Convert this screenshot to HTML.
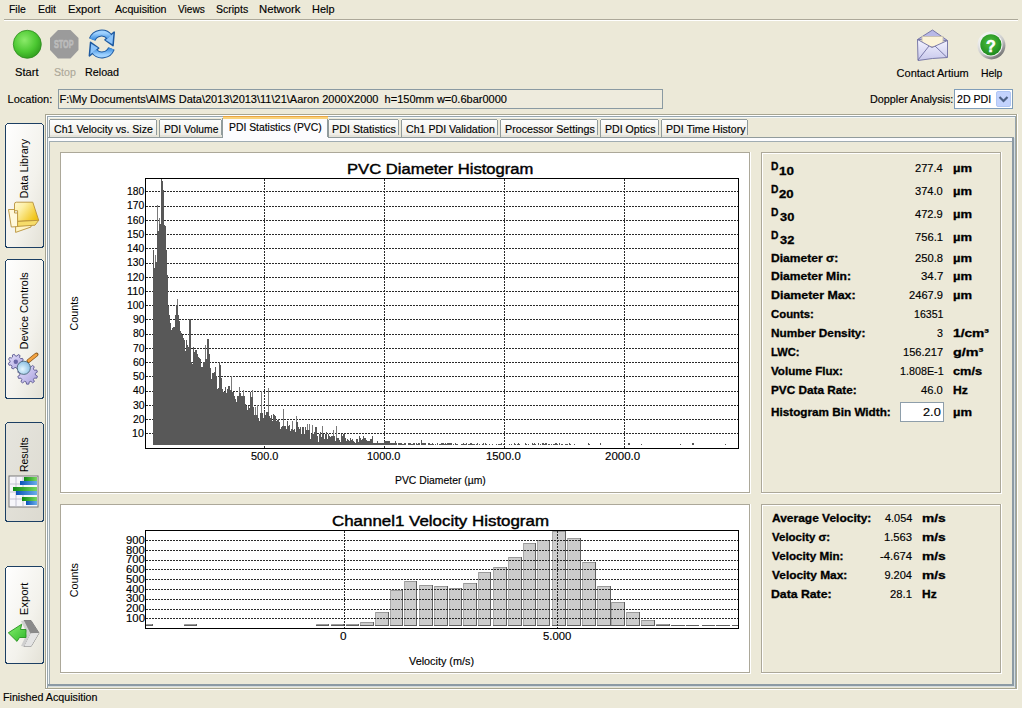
<!DOCTYPE html>
<html><head><meta charset="utf-8"><title>AIMS</title>
<style>
html,body{margin:0;padding:0;}
body{width:1022px;height:708px;overflow:hidden;position:relative;background:#ECE9D8;font-family:'Liberation Sans', sans-serif;font-size:11px;color:#000;}
.t{position:absolute;white-space:pre;line-height:11px;transform-origin:0 0;-webkit-text-stroke:0.15px;}
.a{position:absolute;box-sizing:border-box;}
svg{position:absolute;left:0;top:0;}
</style></head><body>
<svg width="1022" height="708" shape-rendering="crispEdges">
<defs>
<linearGradient id="tabg" x1="0" y1="0" x2="0" y2="1"><stop offset="0" stop-color="#FEFEFE"/><stop offset="1" stop-color="#ECEBE4"/></linearGradient>
<linearGradient id="btng" x1="0" y1="0" x2="1" y2="1"><stop offset="0" stop-color="#FFFFFF"/><stop offset="0.6" stop-color="#F3F2EC"/><stop offset="1" stop-color="#E3E1D6"/></linearGradient>
<linearGradient id="btnsel" x1="0" y1="0" x2="1" y2="1"><stop offset="0" stop-color="#E6E5DE"/><stop offset="1" stop-color="#DCDAD0"/></linearGradient>
</defs>
<rect x="4" y="19" width="1014" height="1" fill="#ACA899"/><rect x="4" y="20" width="1014" height="1" fill="#FFFFFF"/><rect x="58" y="89" width="605" height="20" fill="#8A9AA2"/><rect x="59" y="90" width="603" height="18" fill="#EEEBDD"/><rect x="954" y="89" width="59" height="20" fill="#7F9DB9"/><rect x="955" y="90" width="57" height="18" fill="#FFFFFF"/><rect x="45" y="114" width="972" height="1" fill="#A7A591"/><rect x="45" y="688" width="972" height="1" fill="#A7A591"/><rect x="45" y="114" width="1" height="575" fill="#A7A591"/><rect x="1016" y="114" width="1" height="575" fill="#A7A591"/><rect x="46" y="115" width="970" height="1" fill="#FFFFFF"/><rect x="46" y="115" width="1" height="573" fill="#FFFFFF"/><rect x="45" y="689" width="973" height="1" fill="#FFFFFF"/><rect x="1017" y="114" width="1" height="576" fill="#FFFFFF"/><rect x="47" y="116" width="969" height="1" fill="#98A6AE"/><rect x="47" y="116" width="1" height="572" fill="#98A6AE"/><rect x="48" y="117" width="967" height="1" fill="#F2F6F6"/><rect x="48" y="117" width="1" height="570" fill="#F2F6F6"/><rect x="48" y="137" width="966" height="1" fill="#919B9C"/><rect x="49" y="138" width="965" height="3" fill="#FCFCFE"/><rect x="1012" y="137" width="1" height="549" fill="#8C9AA4"/><rect x="1013" y="137" width="1" height="549" fill="#8C9AA4"/><rect x="48" y="684" width="966" height="1" fill="#8C9AA4"/><rect x="48" y="685" width="966" height="1" fill="#8C9AA4"/><rect x="49" y="141" width="963" height="1" fill="#A0ACB2"/><rect x="1015" y="116" width="1" height="572" fill="#98A6AE"/><rect x="1014" y="138" width="1" height="549" fill="#D4DCDF"/><rect x="48" y="686" width="967" height="1" fill="#D4DCDF"/><rect x="49" y="141" width="1" height="543" fill="#A0ACB2"/><rect x="60" y="152" width="690" height="341" fill="#FFFFFF"/><rect x="60" y="152" width="690" height="1" fill="#ACA899"/><rect x="60" y="492" width="690" height="1" fill="#ACA899"/><rect x="60" y="152" width="1" height="341" fill="#ACA899"/><rect x="749" y="152" width="1" height="341" fill="#ACA899"/><rect x="61" y="153" width="688" height="1" fill="#FFFFFF"/><rect x="61" y="153" width="1" height="339" fill="#FFFFFF"/><rect x="60" y="493" width="691" height="1" fill="#FFFFFF"/><rect x="750" y="152" width="1" height="342" fill="#FFFFFF"/><rect x="761" y="152" width="240" height="341" fill="#ECE9D8"/><rect x="761" y="152" width="240" height="1" fill="#ACA899"/><rect x="761" y="492" width="240" height="1" fill="#ACA899"/><rect x="761" y="152" width="1" height="341" fill="#ACA899"/><rect x="1000" y="152" width="1" height="341" fill="#ACA899"/><rect x="762" y="153" width="238" height="1" fill="#FFFFFF"/><rect x="762" y="153" width="1" height="339" fill="#FFFFFF"/><rect x="761" y="493" width="241" height="1" fill="#FFFFFF"/><rect x="1001" y="152" width="1" height="342" fill="#FFFFFF"/><rect x="60" y="504" width="690" height="169" fill="#FFFFFF"/><rect x="60" y="504" width="690" height="1" fill="#ACA899"/><rect x="60" y="672" width="690" height="1" fill="#ACA899"/><rect x="60" y="504" width="1" height="169" fill="#ACA899"/><rect x="749" y="504" width="1" height="169" fill="#ACA899"/><rect x="61" y="505" width="688" height="1" fill="#FFFFFF"/><rect x="61" y="505" width="1" height="167" fill="#FFFFFF"/><rect x="60" y="673" width="691" height="1" fill="#FFFFFF"/><rect x="750" y="504" width="1" height="170" fill="#FFFFFF"/><rect x="761" y="504" width="240" height="169" fill="#ECE9D8"/><rect x="761" y="504" width="240" height="1" fill="#ACA899"/><rect x="761" y="672" width="240" height="1" fill="#ACA899"/><rect x="761" y="504" width="1" height="169" fill="#ACA899"/><rect x="1000" y="504" width="1" height="169" fill="#ACA899"/><rect x="762" y="505" width="238" height="1" fill="#FFFFFF"/><rect x="762" y="505" width="1" height="167" fill="#FFFFFF"/><rect x="761" y="673" width="241" height="1" fill="#FFFFFF"/><rect x="1001" y="504" width="1" height="170" fill="#FFFFFF"/><rect x="900" y="402" width="44" height="20" fill="#8E9EAA"/><rect x="901" y="403" width="42" height="18" fill="#FFFFFF"/>
<path d="M49.5 137 V121.5 Q49.5 119.5 51.5 119.5 H154.5 Q156.5 119.5 156.5 121.5 V137" fill="url(#tabg)" stroke="#919B9C" stroke-width="1"/><rect x="50" y="135" width="107" height="2" fill="#E5E3DA"/><path d="M159.5 137 V121.5 Q159.5 119.5 161.5 119.5 H219.5 Q221.5 119.5 221.5 121.5 V137" fill="url(#tabg)" stroke="#919B9C" stroke-width="1"/><rect x="160" y="135" width="62" height="2" fill="#E5E3DA"/><path d="M328.5 137 V121.5 Q328.5 119.5 330.5 119.5 H396.5 Q398.5 119.5 398.5 121.5 V137" fill="url(#tabg)" stroke="#919B9C" stroke-width="1"/><rect x="329" y="135" width="70" height="2" fill="#E5E3DA"/><path d="M401.5 137 V121.5 Q401.5 119.5 403.5 119.5 H495.5 Q497.5 119.5 497.5 121.5 V137" fill="url(#tabg)" stroke="#919B9C" stroke-width="1"/><rect x="402" y="135" width="96" height="2" fill="#E5E3DA"/><path d="M500.5 137 V121.5 Q500.5 119.5 502.5 119.5 H595.5 Q597.5 119.5 597.5 121.5 V137" fill="url(#tabg)" stroke="#919B9C" stroke-width="1"/><rect x="501" y="135" width="97" height="2" fill="#E5E3DA"/><path d="M600.5 137 V121.5 Q600.5 119.5 602.5 119.5 H656.5 Q658.5 119.5 658.5 121.5 V137" fill="url(#tabg)" stroke="#919B9C" stroke-width="1"/><rect x="601" y="135" width="58" height="2" fill="#E5E3DA"/><path d="M661.5 137 V121.5 Q661.5 119.5 663.5 119.5 H745.5 Q747.5 119.5 747.5 121.5 V137" fill="url(#tabg)" stroke="#919B9C" stroke-width="1"/><rect x="662" y="135" width="86" height="2" fill="#E5E3DA"/><path d="M222.5 138 V119.5 Q222.5 116.5 225.5 116.5 H324.5 Q327.5 116.5 327.5 119.5 V138" fill="#FCFCFE" stroke="#919B9C" stroke-width="1"/><rect x="223" y="116" width="105" height="1" fill="#EAA544"/><rect x="223" y="117" width="105" height="2" fill="#F9D27A"/><rect x="223" y="137" width="105" height="3" fill="#FCFCFE"/>
<rect x="5.5" y="123.5" width="38" height="124" rx="3" ry="3" fill="url(#btng)" stroke="#1C3F63" stroke-width="1"/><rect x="5.5" y="259.5" width="38" height="139" rx="3" ry="3" fill="url(#btng)" stroke="#1C3F63" stroke-width="1"/><rect x="5.5" y="422.5" width="38" height="99" rx="3" ry="3" fill="url(#btnsel)" stroke="#1C3F63" stroke-width="1"/><rect x="5.5" y="566.5" width="38" height="97" rx="3" ry="3" fill="url(#btng)" stroke="#1C3F63" stroke-width="1"/>
<rect x="145" y="178" width="594" height="271" fill="#FFFFFF"/><line x1="146" y1="433.5" x2="738" y2="433.5" stroke="#2A2A2A" stroke-width="1" stroke-dasharray="2 1"/><line x1="146" y1="419.5" x2="738" y2="419.5" stroke="#2A2A2A" stroke-width="1" stroke-dasharray="2 1"/><line x1="146" y1="405.5" x2="738" y2="405.5" stroke="#2A2A2A" stroke-width="1" stroke-dasharray="2 1"/><line x1="146" y1="391.5" x2="738" y2="391.5" stroke="#2A2A2A" stroke-width="1" stroke-dasharray="2 1"/><line x1="146" y1="376.5" x2="738" y2="376.5" stroke="#2A2A2A" stroke-width="1" stroke-dasharray="2 1"/><line x1="146" y1="362.5" x2="738" y2="362.5" stroke="#2A2A2A" stroke-width="1" stroke-dasharray="2 1"/><line x1="146" y1="348.5" x2="738" y2="348.5" stroke="#2A2A2A" stroke-width="1" stroke-dasharray="2 1"/><line x1="146" y1="334.5" x2="738" y2="334.5" stroke="#2A2A2A" stroke-width="1" stroke-dasharray="2 1"/><line x1="146" y1="319.5" x2="738" y2="319.5" stroke="#2A2A2A" stroke-width="1" stroke-dasharray="2 1"/><line x1="146" y1="305.5" x2="738" y2="305.5" stroke="#2A2A2A" stroke-width="1" stroke-dasharray="2 1"/><line x1="146" y1="291.5" x2="738" y2="291.5" stroke="#2A2A2A" stroke-width="1" stroke-dasharray="2 1"/><line x1="146" y1="277.5" x2="738" y2="277.5" stroke="#2A2A2A" stroke-width="1" stroke-dasharray="2 1"/><line x1="146" y1="263.5" x2="738" y2="263.5" stroke="#2A2A2A" stroke-width="1" stroke-dasharray="2 1"/><line x1="146" y1="248.5" x2="738" y2="248.5" stroke="#2A2A2A" stroke-width="1" stroke-dasharray="2 1"/><line x1="146" y1="234.5" x2="738" y2="234.5" stroke="#2A2A2A" stroke-width="1" stroke-dasharray="2 1"/><line x1="146" y1="220.5" x2="738" y2="220.5" stroke="#2A2A2A" stroke-width="1" stroke-dasharray="2 1"/><line x1="146" y1="206.5" x2="738" y2="206.5" stroke="#2A2A2A" stroke-width="1" stroke-dasharray="2 1"/><line x1="146" y1="191.5" x2="738" y2="191.5" stroke="#2A2A2A" stroke-width="1" stroke-dasharray="2 1"/><line x1="264.5" y1="179" x2="264.5" y2="448" stroke="#2A2A2A" stroke-width="1" stroke-dasharray="2 1"/><line x1="384.5" y1="179" x2="384.5" y2="448" stroke="#2A2A2A" stroke-width="1" stroke-dasharray="2 1"/><line x1="504.5" y1="179" x2="504.5" y2="448" stroke="#2A2A2A" stroke-width="1" stroke-dasharray="2 1"/><line x1="624.5" y1="179" x2="624.5" y2="448" stroke="#2A2A2A" stroke-width="1" stroke-dasharray="2 1"/><path d="M153 250H154V445H153ZM154 268H155V445H154ZM155 262H156V445H155ZM156 262H157V445H156ZM157 231H158V445H157ZM158 231H159V445H158ZM159 224H160V445H159ZM160 224H161V445H160ZM161 179H162V445H161ZM162 181H163V445H162ZM163 190H164V445H163ZM164 225H165V445H164ZM165 226H166V445H165ZM166 250H167V445H166ZM167 275H168V445H167ZM168 306H169V445H168ZM169 315H170V445H169ZM170 323H171V445H170ZM171 330H172V445H171ZM172 328H173V445H172ZM173 327H174V445H173ZM174 327H175V445H174ZM175 315H176V445H175ZM176 305H177V445H176ZM177 305H178V445H177ZM178 315H179V445H178ZM179 321H180V445H179ZM180 331H181V445H180ZM181 333H182V445H181ZM182 335H183V445H182ZM183 338H184V445H183ZM184 340H185V445H184ZM185 351H186V445H185ZM186 340H187V445H186ZM187 345H188V445H187ZM188 347H189V445H188ZM189 319H190V445H189ZM190 319H191V445H190ZM191 362H192V445H191ZM192 364H193V445H192ZM193 347H194V445H193ZM194 352H195V445H194ZM195 350H196V445H195ZM196 350H197V445H196ZM197 354H198V445H197ZM198 357H199V445H198ZM199 358H200V445H199ZM200 359H201V445H200ZM201 367H202V445H201ZM202 367H203V445H202ZM203 362H204V445H203ZM204 362H205V445H204ZM205 359H206V445H205ZM206 359H207V445H206ZM207 339H208V445H207ZM208 339H209V445H208ZM209 354H210V445H209ZM210 368H211V445H210ZM211 379H212V445H211ZM212 373H213V445H212ZM213 373H214V445H213ZM214 372H215V445H214ZM215 367H216V445H215ZM216 376H217V445H216ZM217 389H218V445H217ZM218 388H219V445H218ZM219 362H220V445H219ZM220 365H221V445H220ZM221 378H222V445H221ZM222 389H223V445H222ZM223 392H224V445H223ZM224 392H225V445H224ZM225 387H226V445H225ZM226 393H227V445H226ZM227 389H228V445H227ZM228 386H229V445H228ZM229 386H230V445H229ZM230 390H231V445H230ZM231 390H232V445H231ZM232 392H233V445H232ZM233 392H234V445H233ZM234 396H235V445H234ZM235 399H236V445H235ZM236 402H237V445H236ZM237 396H238V445H237ZM238 396H239V445H238ZM239 393H240V445H239ZM240 393H241V445H240ZM241 396H242V445H241ZM242 396H243V445H242ZM243 396H244V445H243ZM244 396H245V445H244ZM245 404H246V445H245ZM246 406H247V445H246ZM247 410H248V445H247ZM248 406H249V445H248ZM249 408H250V445H249ZM250 392H251V445H250ZM251 397H252V445H251ZM252 397H253V445H252ZM253 407H254V445H253ZM254 415H255V445H254ZM255 415H256V445H255ZM256 415H257V445H256ZM257 415H258V445H257ZM258 418H259V445H258ZM259 421H260V445H259ZM260 413H261V445H260ZM261 413H262V445H261ZM262 413H263V445H262ZM263 418H264V445H263ZM264 411H265V445H264ZM265 415H266V445H265ZM266 412H267V445H266ZM267 412H268V445H267ZM268 412H269V445H268ZM269 416H270V445H269ZM270 418H271V445H270ZM271 415H272V445H271ZM272 421H273V445H272ZM273 414H274V445H273ZM274 415H275V445H274ZM275 416H276V445H275ZM276 421H277V445H276ZM277 420H278V445H277ZM278 419H279V445H278ZM279 422H280V445H279ZM280 429H281V445H280ZM281 427H282V445H281ZM282 426H283V445H282ZM283 426H284V445H283ZM284 426H285V445H284ZM285 426H286V445H285ZM286 429H287V445H286ZM287 421H288V445H287ZM288 426H289V445H288ZM289 425H290V445H289ZM290 431H291V445H290ZM291 429H292V445H291ZM292 429H293V445H292ZM293 430H294V445H293ZM294 429H295V445H294ZM295 432H296V445H295ZM296 422H297V445H296ZM297 422H298V445H297ZM298 427H299V445H298ZM299 429H300V445H299ZM300 427H301V445H300ZM301 434H302V445H301ZM302 427H303V445H302ZM303 427H304V445H303ZM304 434H305V445H304ZM305 427H306V445H305ZM306 430H307V445H306ZM307 430H308V445H307ZM308 430H309V445H308ZM309 430H310V445H309ZM310 439H311V445H310ZM311 434H312V445H311ZM312 434H313V445H312ZM313 434H314V445H313ZM314 432H315V445H314ZM315 427H316V445H315ZM316 427H317V445H316ZM317 436H318V445H317ZM318 442H319V445H318ZM319 434H320V445H319ZM320 432H321V445H320ZM321 437H322V445H321ZM322 434H323V445H322ZM323 434H324V445H323ZM324 439H325V445H324ZM325 434H326V445H325ZM326 432H327V445H326ZM327 439H328V445H327ZM328 434H329V445H328ZM329 436H330V445H329ZM330 437H331V445H330ZM331 436H332V445H331ZM332 436H333V445H332ZM333 436H334V445H333ZM334 436H335V445H334ZM335 441H336V445H335ZM336 438H337V445H336ZM337 438H338V445H337ZM338 438H339V445H338ZM339 440H340V445H339ZM340 442H341V445H340ZM341 434H342V445H341ZM342 436H343V445H342ZM343 434H344V445H343ZM344 434H345V445H344ZM345 438H346V445H345ZM346 441H347V445H346ZM347 439H348V445H347ZM348 440H349V445H348ZM349 441H350V445H349ZM350 438H351V445H350ZM351 440H352V445H351ZM352 439H353V445H352ZM353 441H354V445H353ZM354 442H355V445H354ZM355 443H356V445H355ZM356 439H357V445H356ZM357 439H358V445H357ZM358 442H359V445H358ZM359 436H360V445H359ZM360 438H361V445H360ZM361 440H362V445H361ZM362 439H363V445H362ZM363 436H364V445H363ZM364 438H365V445H364ZM365 438H366V445H365ZM366 440H367V445H366ZM367 441H368V445H367ZM368 441H369V445H368ZM369 441H370V445H369ZM370 439H371V445H370ZM371 439H372V445H371ZM372 436H373V445H372ZM373 443H374V445H373ZM374 443H375V445H374ZM375 443H376V445H375ZM376 443H377V445H376ZM377 441H378V445H377ZM378 443H379V445H378ZM379 443H380V445H379ZM380 443H381V445H380ZM381 443H382V445H381ZM382 443H383V445H382ZM383 443H384V445H383ZM384 441H385V445H384ZM385 441H386V445H385ZM386 441H387V445H386ZM387 441H388V445H387ZM388 441H389V445H388ZM389 441H390V445H389ZM390 443H391V445H390ZM391 443H392V445H391ZM392 443H393V445H392ZM393 443H394V445H393ZM394 443H395V445H394ZM395 441H396V445H395ZM396 443H397V445H396ZM398 443H399V445H398ZM399 443H400V445H399ZM400 443H401V445H400ZM401 443H402V445H401ZM402 444H403V445H402ZM403 444H404V445H403ZM404 443H405V445H404ZM405 443H406V445H405ZM408 443H409V445H408ZM409 443H410V445H409ZM410 443H411V445H410ZM411 444H412V445H411ZM412 444H413V445H412ZM413 443H414V445H413ZM414 443H415V445H414ZM416 443H417V445H416ZM417 444H418V445H417ZM418 443H419V445H418ZM419 443H420V445H419ZM421 440H422V445H421ZM422 443H423V445H422ZM423 443H424V445H423ZM424 443H425V445H424ZM425 443H426V445H425ZM428 443H429V445H428ZM429 443H430V445H429ZM430 444H431V445H430ZM431 444H432V445H431ZM432 443H433V445H432ZM433 444H434V445H433ZM435 444H436V445H435ZM437 443H438V445H437ZM439 444H440V445H439ZM440 444H441V445H440ZM441 443H442V445H441ZM442 443H443V445H442ZM443 443H444V445H443ZM444 444H445V445H444ZM445 443H446V445H445ZM446 444H447V445H446ZM447 443H448V445H447ZM448 443H449V445H448ZM449 443H450V445H449ZM450 443H451V445H450ZM451 443H452V445H451ZM453 444H454V445H453ZM455 443H456V445H455ZM456 444H457V445H456ZM457 444H458V445H457ZM461 444H462V445H461ZM462 444H463V445H462ZM463 443H464V445H463ZM464 444H465V445H464ZM465 444H466V445H465ZM466 443H467V445H466ZM468 444H469V445H468ZM469 444H470V445H469ZM470 443H471V445H470ZM471 443H472V445H471ZM472 444H473V445H472ZM473 444H474V445H473ZM474 444H475V445H474ZM476 444H477V445H476ZM477 443H478V445H477ZM479 444H480V445H479ZM482 444H483V445H482ZM483 443H484V445H483ZM485 443H486V445H485ZM486 444H487V445H486ZM489 444H490V445H489ZM492 444H493V445H492ZM496 444H497V445H496ZM498 444H499V445H498ZM499 444H500V445H499ZM500 444H501V445H500ZM501 443H502V445H501ZM503 444H504V445H503ZM509 444H510V445H509ZM511 444H512V445H511ZM514 443H515V445H514ZM515 444H516V445H515ZM517 444H518V445H517ZM518 443H519V445H518ZM519 444H520V445H519ZM525 443H526V445H525ZM526 444H527V445H526ZM528 444H529V445H528ZM532 443H533V445H532ZM533 444H534V445H533ZM534 443H535V445H534ZM535 444H536V445H535ZM538 443H539V445H538ZM540 444H541V445H540ZM542 443H543V445H542ZM543 443H544V445H543ZM544 444H545V445H544ZM545 443H546V445H545ZM546 443H547V445H546ZM548 444H549V445H548ZM549 444H550V445H549ZM551 444H552V445H551ZM553 444H554V445H553ZM554 444H555V445H554ZM555 443H556V445H555ZM556 443H557V445H556ZM557 444H558V445H557ZM559 443H560V445H559ZM561 444H562V445H561ZM562 444H563V445H562ZM565 444H566V445H565ZM566 444H567V445H566ZM567 444H568V445H567ZM569 443H570V445H569ZM570 444H571V445H570ZM574 444H575V445H574ZM588 443H589V445H588ZM589 444H590V445H589ZM600 443H601V445H600ZM628 443H629V445H628ZM629 443H630V445H629ZM641 444H642V445H641ZM680 444H681V445H680ZM692 443H693V445H692ZM693 443H694V445H693ZM725 444H726V445H725Z" fill="#585858"/><path d="M155 255H156V262H155ZM157 205H158V231H157ZM159 218H160V224H159ZM177 299H178V305H177ZM205 345H206V359H205ZM231 376H232V390H231ZM239 387H240V393H239ZM243 390H244V396H243ZM252 390H253V397H252ZM255 407H256V415H255ZM257 405H258V415H257ZM261 391H262V413H261ZM268 388H269V412H268ZM283 409H284V426H283ZM292 421H293V429H292ZM296 416H297V422H296ZM307 424H308V430H307ZM309 424H310V430H309ZM312 425H313V434H312ZM322 426H323V434H322ZM333 430H334V436H333ZM336 426H337V438H336Z" fill="#7A7A7A"/><rect x="145.5" y="178.5" width="593" height="270" fill="none" stroke="#000" stroke-width="1"/><rect x="146" y="624" width="7" height="2" fill="#CCCCCC"/><rect x="146" y="624" width="7" height="1" fill="#9A9A9A"/><rect x="146" y="624" width="1" height="2" fill="#A8A8A8"/><rect x="152" y="624" width="1" height="2" fill="#606060"/><rect x="146" y="625" width="7" height="1" fill="#606060"/><rect x="184" y="624" width="13" height="2" fill="#CCCCCC"/><rect x="184" y="624" width="13" height="1" fill="#9A9A9A"/><rect x="184" y="624" width="1" height="2" fill="#A8A8A8"/><rect x="196" y="624" width="1" height="2" fill="#606060"/><rect x="184" y="625" width="13" height="1" fill="#606060"/><rect x="316" y="624" width="13" height="2" fill="#CCCCCC"/><rect x="316" y="624" width="13" height="1" fill="#9A9A9A"/><rect x="316" y="624" width="1" height="2" fill="#A8A8A8"/><rect x="328" y="624" width="1" height="2" fill="#606060"/><rect x="316" y="625" width="13" height="1" fill="#606060"/><rect x="331" y="624" width="13" height="2" fill="#CCCCCC"/><rect x="331" y="624" width="13" height="1" fill="#9A9A9A"/><rect x="331" y="624" width="1" height="2" fill="#A8A8A8"/><rect x="343" y="624" width="1" height="2" fill="#606060"/><rect x="331" y="625" width="13" height="1" fill="#606060"/><rect x="346" y="624" width="13" height="2" fill="#CCCCCC"/><rect x="346" y="624" width="13" height="1" fill="#9A9A9A"/><rect x="346" y="624" width="1" height="2" fill="#A8A8A8"/><rect x="358" y="624" width="1" height="2" fill="#606060"/><rect x="346" y="625" width="13" height="1" fill="#606060"/><rect x="360" y="622" width="14" height="4" fill="#CCCCCC"/><rect x="360" y="622" width="14" height="1" fill="#9A9A9A"/><rect x="360" y="622" width="1" height="4" fill="#A8A8A8"/><rect x="373" y="622" width="1" height="4" fill="#606060"/><rect x="360" y="625" width="14" height="1" fill="#606060"/><rect x="375" y="612" width="14" height="14" fill="#CCCCCC"/><rect x="375" y="612" width="14" height="1" fill="#9A9A9A"/><rect x="375" y="612" width="1" height="14" fill="#A8A8A8"/><rect x="388" y="612" width="1" height="14" fill="#606060"/><rect x="375" y="625" width="14" height="1" fill="#606060"/><rect x="390" y="590" width="13" height="36" fill="#CCCCCC"/><rect x="390" y="590" width="13" height="1" fill="#9A9A9A"/><rect x="390" y="590" width="1" height="36" fill="#A8A8A8"/><rect x="402" y="590" width="1" height="36" fill="#606060"/><rect x="390" y="625" width="13" height="1" fill="#606060"/><rect x="404" y="581" width="13" height="45" fill="#CCCCCC"/><rect x="404" y="581" width="13" height="1" fill="#9A9A9A"/><rect x="404" y="581" width="1" height="45" fill="#A8A8A8"/><rect x="416" y="581" width="1" height="45" fill="#606060"/><rect x="404" y="625" width="13" height="1" fill="#606060"/><rect x="419" y="585" width="14" height="41" fill="#CCCCCC"/><rect x="419" y="585" width="14" height="1" fill="#9A9A9A"/><rect x="419" y="585" width="1" height="41" fill="#A8A8A8"/><rect x="432" y="585" width="1" height="41" fill="#606060"/><rect x="419" y="625" width="14" height="1" fill="#606060"/><rect x="434" y="586" width="14" height="40" fill="#CCCCCC"/><rect x="434" y="586" width="14" height="1" fill="#9A9A9A"/><rect x="434" y="586" width="1" height="40" fill="#A8A8A8"/><rect x="447" y="586" width="1" height="40" fill="#606060"/><rect x="434" y="625" width="14" height="1" fill="#606060"/><rect x="449" y="588" width="13" height="38" fill="#CCCCCC"/><rect x="449" y="588" width="13" height="1" fill="#9A9A9A"/><rect x="449" y="588" width="1" height="38" fill="#A8A8A8"/><rect x="461" y="588" width="1" height="38" fill="#606060"/><rect x="449" y="625" width="13" height="1" fill="#606060"/><rect x="463" y="583" width="14" height="43" fill="#CCCCCC"/><rect x="463" y="583" width="14" height="1" fill="#9A9A9A"/><rect x="463" y="583" width="1" height="43" fill="#A8A8A8"/><rect x="476" y="583" width="1" height="43" fill="#606060"/><rect x="463" y="625" width="14" height="1" fill="#606060"/><rect x="478" y="572" width="13" height="54" fill="#CCCCCC"/><rect x="478" y="572" width="13" height="1" fill="#9A9A9A"/><rect x="478" y="572" width="1" height="54" fill="#A8A8A8"/><rect x="490" y="572" width="1" height="54" fill="#606060"/><rect x="478" y="625" width="13" height="1" fill="#606060"/><rect x="493" y="567" width="14" height="59" fill="#CCCCCC"/><rect x="493" y="567" width="14" height="1" fill="#9A9A9A"/><rect x="493" y="567" width="1" height="59" fill="#A8A8A8"/><rect x="506" y="567" width="1" height="59" fill="#606060"/><rect x="493" y="625" width="14" height="1" fill="#606060"/><rect x="508" y="557" width="14" height="69" fill="#CCCCCC"/><rect x="508" y="557" width="14" height="1" fill="#9A9A9A"/><rect x="508" y="557" width="1" height="69" fill="#A8A8A8"/><rect x="521" y="557" width="1" height="69" fill="#606060"/><rect x="508" y="625" width="14" height="1" fill="#606060"/><rect x="523" y="543" width="13" height="83" fill="#CCCCCC"/><rect x="523" y="543" width="13" height="1" fill="#9A9A9A"/><rect x="523" y="543" width="1" height="83" fill="#A8A8A8"/><rect x="535" y="543" width="1" height="83" fill="#606060"/><rect x="523" y="625" width="13" height="1" fill="#606060"/><rect x="537" y="540" width="13" height="86" fill="#CCCCCC"/><rect x="537" y="540" width="13" height="1" fill="#9A9A9A"/><rect x="537" y="540" width="1" height="86" fill="#A8A8A8"/><rect x="549" y="540" width="1" height="86" fill="#606060"/><rect x="537" y="625" width="13" height="1" fill="#606060"/><rect x="552" y="531" width="14" height="95" fill="#CCCCCC"/><rect x="552" y="531" width="14" height="1" fill="#9A9A9A"/><rect x="552" y="531" width="1" height="95" fill="#A8A8A8"/><rect x="565" y="531" width="1" height="95" fill="#606060"/><rect x="552" y="625" width="14" height="1" fill="#606060"/><rect x="567" y="538" width="14" height="88" fill="#CCCCCC"/><rect x="567" y="538" width="14" height="1" fill="#9A9A9A"/><rect x="567" y="538" width="1" height="88" fill="#A8A8A8"/><rect x="580" y="538" width="1" height="88" fill="#606060"/><rect x="567" y="625" width="14" height="1" fill="#606060"/><rect x="582" y="562" width="14" height="64" fill="#CCCCCC"/><rect x="582" y="562" width="14" height="1" fill="#9A9A9A"/><rect x="582" y="562" width="1" height="64" fill="#A8A8A8"/><rect x="595" y="562" width="1" height="64" fill="#606060"/><rect x="582" y="625" width="14" height="1" fill="#606060"/><rect x="597" y="586" width="14" height="40" fill="#CCCCCC"/><rect x="597" y="586" width="14" height="1" fill="#9A9A9A"/><rect x="597" y="586" width="1" height="40" fill="#A8A8A8"/><rect x="610" y="586" width="1" height="40" fill="#606060"/><rect x="597" y="625" width="14" height="1" fill="#606060"/><rect x="611" y="602" width="14" height="24" fill="#CCCCCC"/><rect x="611" y="602" width="14" height="1" fill="#9A9A9A"/><rect x="611" y="602" width="1" height="24" fill="#A8A8A8"/><rect x="624" y="602" width="1" height="24" fill="#606060"/><rect x="611" y="625" width="14" height="1" fill="#606060"/><rect x="626" y="612" width="14" height="14" fill="#CCCCCC"/><rect x="626" y="612" width="14" height="1" fill="#9A9A9A"/><rect x="626" y="612" width="1" height="14" fill="#A8A8A8"/><rect x="639" y="612" width="1" height="14" fill="#606060"/><rect x="626" y="625" width="14" height="1" fill="#606060"/><rect x="641" y="620" width="14" height="6" fill="#CCCCCC"/><rect x="641" y="620" width="14" height="1" fill="#9A9A9A"/><rect x="641" y="620" width="1" height="6" fill="#A8A8A8"/><rect x="654" y="620" width="1" height="6" fill="#606060"/><rect x="641" y="625" width="14" height="1" fill="#606060"/><rect x="656" y="624" width="14" height="2" fill="#CCCCCC"/><rect x="656" y="624" width="14" height="1" fill="#9A9A9A"/><rect x="656" y="624" width="1" height="2" fill="#A8A8A8"/><rect x="669" y="624" width="1" height="2" fill="#606060"/><rect x="656" y="625" width="14" height="1" fill="#606060"/><rect x="671" y="625" width="14" height="1" fill="#CCCCCC"/><rect x="671" y="625" width="14" height="1" fill="#9A9A9A"/><rect x="671" y="625" width="1" height="1" fill="#A8A8A8"/><rect x="684" y="625" width="1" height="1" fill="#606060"/><rect x="671" y="625" width="14" height="1" fill="#606060"/><rect x="686" y="625" width="13" height="1" fill="#CCCCCC"/><rect x="686" y="625" width="13" height="1" fill="#9A9A9A"/><rect x="686" y="625" width="1" height="1" fill="#A8A8A8"/><rect x="698" y="625" width="1" height="1" fill="#606060"/><rect x="686" y="625" width="13" height="1" fill="#606060"/><rect x="702" y="625" width="13" height="1" fill="#CCCCCC"/><rect x="702" y="625" width="13" height="1" fill="#9A9A9A"/><rect x="702" y="625" width="1" height="1" fill="#A8A8A8"/><rect x="714" y="625" width="1" height="1" fill="#606060"/><rect x="702" y="625" width="13" height="1" fill="#606060"/><rect x="716" y="625" width="14" height="1" fill="#CCCCCC"/><rect x="716" y="625" width="14" height="1" fill="#9A9A9A"/><rect x="716" y="625" width="1" height="1" fill="#A8A8A8"/><rect x="729" y="625" width="1" height="1" fill="#606060"/><rect x="716" y="625" width="14" height="1" fill="#606060"/><rect x="732" y="625" width="7" height="1" fill="#CCCCCC"/><rect x="732" y="625" width="7" height="1" fill="#9A9A9A"/><rect x="732" y="625" width="1" height="1" fill="#A8A8A8"/><rect x="738" y="625" width="1" height="1" fill="#606060"/><rect x="732" y="625" width="7" height="1" fill="#606060"/><line x1="146" y1="618.5" x2="738" y2="618.5" stroke="#2A2A2A" stroke-width="1" stroke-dasharray="2 1"/><line x1="146" y1="609.5" x2="738" y2="609.5" stroke="#2A2A2A" stroke-width="1" stroke-dasharray="2 1"/><line x1="146" y1="599.5" x2="738" y2="599.5" stroke="#2A2A2A" stroke-width="1" stroke-dasharray="2 1"/><line x1="146" y1="589.5" x2="738" y2="589.5" stroke="#2A2A2A" stroke-width="1" stroke-dasharray="2 1"/><line x1="146" y1="579.5" x2="738" y2="579.5" stroke="#2A2A2A" stroke-width="1" stroke-dasharray="2 1"/><line x1="146" y1="569.5" x2="738" y2="569.5" stroke="#2A2A2A" stroke-width="1" stroke-dasharray="2 1"/><line x1="146" y1="560.5" x2="738" y2="560.5" stroke="#2A2A2A" stroke-width="1" stroke-dasharray="2 1"/><line x1="146" y1="550.5" x2="738" y2="550.5" stroke="#2A2A2A" stroke-width="1" stroke-dasharray="2 1"/><line x1="146" y1="540.5" x2="738" y2="540.5" stroke="#2A2A2A" stroke-width="1" stroke-dasharray="2 1"/><line x1="344.5" y1="531" x2="344.5" y2="628" stroke="#2A2A2A" stroke-width="1" stroke-dasharray="2 1"/><line x1="557.5" y1="531" x2="557.5" y2="628" stroke="#2A2A2A" stroke-width="1" stroke-dasharray="2 1"/><rect x="145.5" y="530.5" width="593" height="98" fill="none" stroke="#000" stroke-width="1"/>
</svg>
<svg width="1022" height="708">
<defs>
<radialGradient id="gball" cx="0.4" cy="0.35" r="0.7"><stop offset="0" stop-color="#8BEA6A"/><stop offset="0.6" stop-color="#4CC832"/><stop offset="1" stop-color="#2E9A1C"/></radialGradient>
<linearGradient id="blue" x1="0" y1="0" x2="0" y2="1"><stop offset="0" stop-color="#9FD2FF"/><stop offset="1" stop-color="#3D8FE0"/></linearGradient>
<radialGradient id="ghelp" cx="0.45" cy="0.4" r="0.6"><stop offset="0" stop-color="#4FC13F"/><stop offset="1" stop-color="#1E8A1E"/></radialGradient>
<linearGradient id="env" x1="0" y1="0" x2="0" y2="1"><stop offset="0" stop-color="#F4F4FF"/><stop offset="1" stop-color="#C8C8EC"/></linearGradient>
<linearGradient id="fold" x1="0" y1="0" x2="1" y2="0.6"><stop offset="0" stop-color="#FFF8D0"/><stop offset="0.35" stop-color="#FDF0A8"/><stop offset="1" stop-color="#F0C418"/></linearGradient>
<linearGradient id="ring" x1="0.2" y1="0.1" x2="0.8" y2="0.95"><stop offset="0" stop-color="#F6F6F6"/><stop offset="0.55" stop-color="#C8C8C8"/><stop offset="1" stop-color="#6A6A6A"/></linearGradient>
<linearGradient id="gbar" x1="0" y1="0" x2="1" y2="0"><stop offset="0" stop-color="#0E8A12"/><stop offset="1" stop-color="#7AD860"/></linearGradient>
<linearGradient id="bbar" x1="0" y1="0" x2="1" y2="0"><stop offset="0" stop-color="#0A52B8"/><stop offset="1" stop-color="#6AAEEA"/></linearGradient>
<linearGradient id="gearg" x1="0" y1="0" x2="1" y2="1"><stop offset="0" stop-color="#E8E4FF"/><stop offset="1" stop-color="#A8A0DC"/></linearGradient>
<radialGradient id="lens" cx="0.4" cy="0.6" r="0.7"><stop offset="0" stop-color="#E8F8FF"/><stop offset="1" stop-color="#7FB8E0"/></radialGradient>
<linearGradient id="garrow" x1="0" y1="0" x2="1" y2="1"><stop offset="0" stop-color="#88F070"/><stop offset="1" stop-color="#2FB82A"/></linearGradient>
</defs>
<!-- start -->
<circle cx="27.3" cy="44.3" r="14" fill="url(#gball)" stroke="#2F8A1E" stroke-width="0.8"/>
<!-- stop -->
<polygon points="58,30 70.5,30 78.5,38 78.5,50 70.5,58.5 58,58.5 50,50 50,38" fill="#9B9B9B"/>
<text x="54" y="48" font-family="Liberation Sans" font-weight="bold" font-size="11" fill="#BDBDBD" stroke="#BDBDBD" stroke-width="0.6" textLength="19.5" lengthAdjust="spacingAndGlyphs">STOP</text>
<!-- reload -->
<g id="rarrow">
<path d="M92.2 39.5 A10 10 0 0 1 109.5 37" fill="none" stroke="#1E5AA0" stroke-width="7"/>
<path d="M105 39.8 L114.2 32.2 L113 45.6 Z" fill="#1E5AA0" stroke="#1E5AA0" stroke-width="1.6" stroke-linejoin="round"/>
<path d="M92.2 39.5 A10 10 0 0 1 109.5 37" fill="none" stroke="url(#blue)" stroke-width="5"/>
<path d="M105.6 39.9 L113.4 33.6 L112.4 44.3 Z" fill="#8CC4FA"/>
</g>
<use href="#rarrow" transform="rotate(180 101.8 44)"/>
<!-- envelope -->
<g stroke="#6E6EA0" stroke-width="0.9">
<path d="M917.5 39.5 L932.5 30 L947.5 40.5 Z" fill="#B8B8E6"/>
<rect x="922" y="36.5" width="21" height="10" fill="#FBF3D8" stroke="#C8C0B0"/>
<path d="M917.5 39.5 L932 47.5 L947.5 40.5 L947.5 57.5 Q932 58 918 60.5 Z" fill="url(#env)"/>
<path d="M918 60 L929 46 M947 57.5 L935 46" fill="none"/>
</g>
<!-- help -->
<circle cx="991.4" cy="45.4" r="14" fill="url(#ring)"/>
<circle cx="990.9" cy="44.8" r="11.6" fill="#F4F4F4"/>
<circle cx="990.9" cy="44.8" r="10.6" fill="url(#ghelp)"/>
<text x="991" y="51.8" font-family="Liberation Sans" font-weight="bold" font-size="16" fill="#FFFFFF" stroke="#FFFFFF" stroke-width="0.5" text-anchor="middle">?</text>
<!-- combo button -->
<rect x="996.5" y="91.5" width="14" height="15" rx="1.5" fill="#C3D3FD" stroke="#B1C7F4"/>
<path d="M999.5 97 L1003.5 101 L1007.5 97" fill="none" stroke="#4D6185" stroke-width="2.2"/>
<!-- folder icon -->
<g stroke="#B8923A" stroke-width="0.9" stroke-linejoin="round">
<path d="M15.5 216 H19 V219 H31.5 L31 227 L15.6 232.4 Z" fill="#FFF4C4"/>
<path d="M8.5 209.5 H14.5 V213 H18 V226.5 L11.3 227 Z" fill="#FFF8DA"/>
<path d="M14.5 204 Q14.5 202.2 16.3 202.2 H32.8 L38.7 220.3 L17.6 221.4 V210.7 H14.5 Z" fill="url(#fold)"/>
<path d="M17.6 221.4 L38.7 220.3 L35 225.2 L17.6 226.4 Z" fill="#F6DC6A"/>
</g>
<!-- gears + magnifier -->
<path d="M21.48 362.95 L23.02 364.17 L22.10 366.05 L20.20 365.58 L19.00 366.63 L19.23 368.58 L17.26 369.26 L16.23 367.58 L14.65 367.48 L13.43 369.02 L11.55 368.10 L12.02 366.20 L10.97 365.00 L9.02 365.23 L8.34 363.26 L10.02 362.23 L10.12 360.65 L8.58 359.43 L9.50 357.55 L11.40 358.02 L12.60 356.97 L12.37 355.02 L14.34 354.34 L15.37 356.02 L16.95 356.12 L18.17 354.58 L20.05 355.50 L19.58 357.40 L20.63 358.60 L22.58 358.37 L23.26 360.34 L21.58 361.37 Z" fill="url(#gearg)" stroke="#5A5890" stroke-width="0.9"/>
<circle cx="15.8" cy="361.8" r="2.2" fill="#6A66A8"/>
<path d="M35.36 374.98 L37.41 376.13 L36.75 378.22 L34.41 378.00 L33.42 379.39 L34.40 381.53 L32.64 382.84 L30.88 381.28 L29.26 381.82 L28.80 384.13 L26.60 384.15 L26.09 381.85 L24.46 381.34 L22.73 382.94 L20.94 381.66 L21.88 379.51 L20.86 378.13 L18.53 378.41 L17.83 376.33 L19.86 375.13 L19.84 373.42 L17.79 372.27 L18.45 370.18 L20.79 370.40 L21.78 369.01 L20.80 366.87 L22.56 365.56 L24.32 367.12 L25.94 366.58 L26.40 364.27 L28.60 364.25 L29.11 366.55 L30.74 367.06 L32.47 365.46 L34.26 366.74 L33.32 368.89 L34.34 370.27 L36.67 369.99 L37.37 372.07 L35.34 373.27 Z" fill="url(#gearg)" stroke="#5A5890" stroke-width="0.9"/>
<path d="M28.5 361 L36.5 354.5" stroke="#8A5A20" stroke-width="4" stroke-linecap="round"/>
<path d="M28.8 360.7 L36.2 354.8" stroke="#F4A340" stroke-width="2.6" stroke-linecap="round"/>
<circle cx="23.8" cy="367.8" r="6.6" fill="url(#lens)" stroke="#4E6878" stroke-width="0.9"/>
<!-- results grid -->
<rect x="9" y="476" width="29" height="31" fill="#F6F6FA" stroke="#7A7A7A" stroke-width="1"/>
<path d="M16 477 V506 M23 477 V506 M10 484 H37 M10 492 H37 M10 499 H37" stroke="#B8B8C8" stroke-width="0.8"/>
<rect x="24" y="477" width="13" height="4" fill="url(#gbar)"/>
<rect x="20" y="481" width="17" height="4" fill="url(#bbar)"/>
<rect x="13" y="487" width="24" height="4" fill="url(#gbar)"/>
<rect x="16" y="491" width="21" height="4" fill="url(#bbar)"/>
<rect x="22" y="497" width="15" height="4" fill="url(#gbar)"/>
<rect x="26" y="501" width="11" height="4" fill="url(#bbar)"/>
<!-- export -->
<path d="M24 620.5 L31 620.5 L39 633 L31 646.5 L24 646.5 L30.5 633.5 Z" fill="#F2F2F2" stroke="#6E6E6E" stroke-width="0.9"/>
<path d="M24 620.5 L31 620.5 L39 633 L30.5 633.5 Z" fill="#8A8A8A"/>
<path d="M30.5 633.5 L39 633 L31 646.5 L24 646.5 Z" fill="#E4E4E4"/>
<path d="M24 620.5 L30.5 633.5 L24 646.5 L21 646 L27 633.5 L21 621 Z" fill="#CFCFCF"/>
<path d="M8.3 632.8 L21.7 624.2 L20.5 629.5 L26 629.5 L26 637.5 L19.5 637.5 L17 641.4 Z" fill="url(#garrow)" stroke="#27921F" stroke-width="0.9"/>
</svg>

<div class="t" style="left:8.71px;top:4px;transform:scaleX(0.945);">File</div>
<div class="t" style="left:37.65px;top:4px;transform:scaleX(0.950);">Edit</div>
<div class="t" style="left:68.49px;top:4px;transform:scaleX(1.015);">Export</div>
<div class="t" style="left:114.80px;top:4px;transform:scaleX(0.968);">Acquisition</div>
<div class="t" style="left:177.60px;top:4px;transform:scaleX(0.918);">Views</div>
<div class="t" style="left:216.22px;top:4px;transform:scaleX(0.956);">Scripts</div>
<div class="t" style="left:259.37px;top:4px;transform:scaleX(1.029);">Network</div>
<div class="t" style="left:312.21px;top:4px;transform:scaleX(0.993);">Help</div>
<div class="t" style="left:15.49px;top:67px;transform:scaleX(1.011);">Start</div>
<div class="t" style="left:53.52px;top:67px;color:#ACA899;transform:scaleX(0.966);">Stop</div>
<div class="t" style="left:84.52px;top:67px;transform:scaleX(0.977);">Reload</div>
<div class="t" style="left:896.60px;top:68px;">Contact Artium</div>
<div class="t" style="left:980.75px;top:68px;transform:scaleX(0.946);">Help</div>
<div class="t" style="left:7.60px;top:94px;">Location:</div>
<div class="t" style="left:59.50px;top:94px;">F:\My Documents\AIMS Data\2013\2013\11\21\Aaron 2000X2000  h=150mm w=0.6bar0000</div>
<div class="t" style="left:869.82px;top:94px;transform:scaleX(0.981);">Doppler Analysis:</div>
<div class="t" style="left:957.02px;top:94px;transform:scaleX(0.965);">2D PDI</div>
<div class="t" style="left:54.22px;top:124px;transform:scaleX(0.963);">Ch1 Velocity vs. Size</div>
<div class="t" style="left:163.96px;top:124px;transform:scaleX(0.936);">PDI Volume</div>
<div class="t" style="left:228.96px;top:122px;transform:scaleX(0.942);">PDI Statistics (PVC)</div>
<div class="t" style="left:331.72px;top:124px;transform:scaleX(0.978);">PDI Statistics</div>
<div class="t" style="left:406.02px;top:124px;transform:scaleX(0.964);">Ch1 PDI Validation</div>
<div class="t" style="left:504.93px;top:124px;transform:scaleX(0.973);">Processor Settings</div>
<div class="t" style="left:604.74px;top:124px;transform:scaleX(0.964);">PDI Optics</div>
<div class="t" style="left:665.54px;top:124px;transform:scaleX(0.963);">PDI Time History</div>
<div class="t" style="left:2.53px;top:692px;transform:scaleX(0.972);">Finished Acquisition</div>
<div class="t" style="left:347.42px;top:162px;font-size:14px;line-height:14px;-webkit-text-stroke:0.4px;transform:scaleX(1.186);">PVC Diameter Histogram</div>
<div class="t" style="left:394.96px;top:475px;transform:scaleX(0.944);">PVC Diameter (µm)</div>
<div class="t" style="left:331.99px;top:514px;font-size:14px;line-height:14px;-webkit-text-stroke:0.4px;transform:scaleX(1.207);">Channel1 Velocity Histogram</div>
<div class="t" style="left:408.80px;top:656px;transform:scaleX(0.985);">Velocity (m/s)</div>
<div class="t" style="left:251.20px;top:451px;transform:scaleX(0.991);">500.0</div>
<div class="t" style="left:366.95px;top:451px;transform:scaleX(0.994);">1000.0</div>
<div class="t" style="left:485.53px;top:451px;transform:scaleX(1.031);">1500.0</div>
<div class="t" style="left:605.48px;top:451px;transform:scaleX(1.044);">2000.0</div>
<div class="t" style="left:340.27px;top:631px;transform:scaleX(1.067);">0</div>
<div class="t" style="left:543.19px;top:631px;transform:scaleX(1.028);">5.000</div>
<div class="t" style="left:770.88px;top:253px;font-weight:bold;-webkit-text-stroke:0.3px;transform:scaleX(1.097);">Diameter σ:</div>
<div class="t" style="left:770.88px;top:271px;font-weight:bold;-webkit-text-stroke:0.3px;transform:scaleX(1.099);">Diameter Min:</div>
<div class="t" style="left:770.86px;top:290px;font-weight:bold;-webkit-text-stroke:0.3px;transform:scaleX(1.125);">Diameter Max:</div>
<div class="t" style="left:771.18px;top:309px;font-weight:bold;-webkit-text-stroke:0.3px;transform:scaleX(1.032);">Counts:</div>
<div class="t" style="left:770.90px;top:328px;font-weight:bold;-webkit-text-stroke:0.3px;transform:scaleX(1.072);">Number Density:</div>
<div class="t" style="left:770.94px;top:347px;font-weight:bold;-webkit-text-stroke:0.3px;transform:scaleX(1.010);">LWC:</div>
<div class="t" style="left:771.44px;top:366px;font-weight:bold;-webkit-text-stroke:0.3px;transform:scaleX(1.054);">Volume Flux:</div>
<div class="t" style="left:770.90px;top:385px;font-weight:bold;-webkit-text-stroke:0.3px;transform:scaleX(1.070);">PVC Data Rate:</div>
<div class="t" style="left:770.90px;top:407px;font-weight:bold;-webkit-text-stroke:0.3px;transform:scaleX(1.066);">Histogram Bin Width:</div>
<div class="t" style="left:915.10px;top:163px;transform:scaleX(1.009);">277.4</div>
<div class="t" style="left:915.10px;top:186px;transform:scaleX(1.009);">374.0</div>
<div class="t" style="left:915.35px;top:209px;transform:scaleX(1.009);">472.9</div>
<div class="t" style="left:915.09px;top:232px;transform:scaleX(1.019);">756.1</div>
<div class="t" style="left:915.09px;top:253px;transform:scaleX(1.019);">250.8</div>
<div class="t" style="left:920.78px;top:271px;transform:scaleX(1.039);">34.7</div>
<div class="t" style="left:909.19px;top:290px;transform:scaleX(1.012);">2467.9</div>
<div class="t" style="left:913.68px;top:309px;transform:scaleX(0.964);">16351</div>
<div class="t" style="left:937.01px;top:328px;transform:scaleX(0.971);">3</div>
<div class="t" style="left:903.04px;top:347px;transform:scaleX(1.008);">156.217</div>
<div class="t" style="left:899.57px;top:366px;transform:scaleX(0.978);">1.808E-1</div>
<div class="t" style="left:921.25px;top:385px;transform:scaleX(1.017);">46.0</div>
<div class="t" style="left:922.62px;top:407px;transform:scaleX(1.159);">2.0</div>
<div class="t" style="left:952.92px;top:163px;font-weight:bold;-webkit-text-stroke:0.3px;transform:scaleX(1.180);">µm</div>
<div class="t" style="left:952.92px;top:186px;font-weight:bold;-webkit-text-stroke:0.3px;transform:scaleX(1.180);">µm</div>
<div class="t" style="left:952.92px;top:209px;font-weight:bold;-webkit-text-stroke:0.3px;transform:scaleX(1.180);">µm</div>
<div class="t" style="left:952.92px;top:232px;font-weight:bold;-webkit-text-stroke:0.3px;transform:scaleX(1.180);">µm</div>
<div class="t" style="left:952.92px;top:253px;font-weight:bold;-webkit-text-stroke:0.3px;transform:scaleX(1.180);">µm</div>
<div class="t" style="left:952.92px;top:271px;font-weight:bold;-webkit-text-stroke:0.3px;transform:scaleX(1.180);">µm</div>
<div class="t" style="left:952.92px;top:290px;font-weight:bold;-webkit-text-stroke:0.3px;transform:scaleX(1.180);">µm</div>
<div class="t" style="left:952.86px;top:328px;font-weight:bold;-webkit-text-stroke:0.3px;transform:scaleX(1.250);">1/cm³</div>
<div class="t" style="left:953.15px;top:347px;font-weight:bold;-webkit-text-stroke:0.3px;transform:scaleX(1.307);">g/m³</div>
<div class="t" style="left:953.22px;top:366px;font-weight:bold;-webkit-text-stroke:0.3px;transform:scaleX(1.163);">cm/s</div>
<div class="t" style="left:952.97px;top:385px;font-weight:bold;-webkit-text-stroke:0.3px;transform:scaleX(1.102);">Hz</div>
<div class="t" style="left:952.92px;top:407px;font-weight:bold;-webkit-text-stroke:0.3px;transform:scaleX(1.180);">µm</div>
<div class="t" style="left:771.10px;top:161px;font-weight:bold;-webkit-text-stroke:0.3px;transform:scaleX(0.933);">D</div>
<div class="t" style="left:778.89px;top:166px;font-weight:bold;-webkit-text-stroke:0.3px;transform:scaleX(1.218);">10</div>
<div class="t" style="left:771.10px;top:184px;font-weight:bold;-webkit-text-stroke:0.3px;transform:scaleX(0.933);">D</div>
<div class="t" style="left:779.20px;top:189px;font-weight:bold;-webkit-text-stroke:0.3px;transform:scaleX(1.191);">20</div>
<div class="t" style="left:771.10px;top:207px;font-weight:bold;-webkit-text-stroke:0.3px;transform:scaleX(0.933);">D</div>
<div class="t" style="left:779.51px;top:212px;font-weight:bold;-webkit-text-stroke:0.3px;transform:scaleX(1.165);">30</div>
<div class="t" style="left:771.10px;top:230px;font-weight:bold;-webkit-text-stroke:0.3px;transform:scaleX(0.933);">D</div>
<div class="t" style="left:779.51px;top:235px;font-weight:bold;-webkit-text-stroke:0.3px;transform:scaleX(1.165);">32</div>
<div class="t" style="left:771.83px;top:513px;font-weight:bold;-webkit-text-stroke:0.3px;transform:scaleX(1.088);">Average Velocity:</div>
<div class="t" style="left:771.84px;top:532px;font-weight:bold;-webkit-text-stroke:0.3px;transform:scaleX(1.042);">Velocity σ:</div>
<div class="t" style="left:771.83px;top:551px;font-weight:bold;-webkit-text-stroke:0.3px;transform:scaleX(1.062);">Velocity Min:</div>
<div class="t" style="left:771.83px;top:570px;font-weight:bold;-webkit-text-stroke:0.3px;transform:scaleX(1.080);">Velocity Max:</div>
<div class="t" style="left:771.27px;top:589px;font-weight:bold;-webkit-text-stroke:0.3px;transform:scaleX(1.113);">Data Rate:</div>
<div class="t" style="left:884.65px;top:513px;transform:scaleX(0.993);">4.054</div>
<div class="t" style="left:884.13px;top:532px;transform:scaleX(1.021);">1.563</div>
<div class="t" style="left:879.89px;top:551px;transform:scaleX(1.026);">-4.674</div>
<div class="t" style="left:884.40px;top:570px;">9.204</div>
<div class="t" style="left:890.19px;top:589px;transform:scaleX(1.024);">28.1</div>
<div class="t" style="left:921.86px;top:513px;font-weight:bold;-webkit-text-stroke:0.3px;transform:scaleX(1.251);">m/s</div>
<div class="t" style="left:921.86px;top:532px;font-weight:bold;-webkit-text-stroke:0.3px;transform:scaleX(1.251);">m/s</div>
<div class="t" style="left:921.86px;top:551px;font-weight:bold;-webkit-text-stroke:0.3px;transform:scaleX(1.251);">m/s</div>
<div class="t" style="left:921.86px;top:570px;font-weight:bold;-webkit-text-stroke:0.3px;transform:scaleX(1.251);">m/s</div>
<div class="t" style="left:921.99px;top:589px;font-weight:bold;-webkit-text-stroke:0.3px;transform:scaleX(1.086);">Hz</div>
<div class="t" style="left:132.47px;top:428px;transform:scaleX(0.973);">10</div>
<div class="t" style="left:132.72px;top:414px;transform:scaleX(0.951);">20</div>
<div class="t" style="left:132.72px;top:400px;transform:scaleX(0.951);">30</div>
<div class="t" style="left:132.97px;top:385px;transform:scaleX(0.930);">40</div>
<div class="t" style="left:132.72px;top:371px;transform:scaleX(0.951);">50</div>
<div class="t" style="left:132.72px;top:357px;transform:scaleX(0.951);">60</div>
<div class="t" style="left:132.72px;top:343px;transform:scaleX(0.951);">70</div>
<div class="t" style="left:132.72px;top:328px;transform:scaleX(0.951);">80</div>
<div class="t" style="left:132.72px;top:314px;transform:scaleX(0.951);">90</div>
<div class="t" style="left:127.00px;top:300px;transform:scaleX(0.939);">100</div>
<div class="t" style="left:126.96px;top:286px;transform:scaleX(0.982);">110</div>
<div class="t" style="left:127.00px;top:272px;transform:scaleX(0.939);">120</div>
<div class="t" style="left:127.00px;top:257px;transform:scaleX(0.939);">130</div>
<div class="t" style="left:127.00px;top:243px;transform:scaleX(0.939);">140</div>
<div class="t" style="left:127.00px;top:229px;transform:scaleX(0.939);">150</div>
<div class="t" style="left:127.00px;top:215px;transform:scaleX(0.939);">160</div>
<div class="t" style="left:127.00px;top:200px;transform:scaleX(0.939);">170</div>
<div class="t" style="left:127.00px;top:186px;transform:scaleX(0.939);">180</div>
<div class="t" style="left:125.72px;top:613px;transform:scaleX(1.038);">100</div>
<div class="t" style="left:125.99px;top:603px;transform:scaleX(1.023);">200</div>
<div class="t" style="left:125.99px;top:593px;transform:scaleX(1.023);">300</div>
<div class="t" style="left:126.25px;top:584px;transform:scaleX(1.008);">400</div>
<div class="t" style="left:125.99px;top:574px;transform:scaleX(1.023);">500</div>
<div class="t" style="left:125.99px;top:564px;transform:scaleX(1.023);">600</div>
<div class="t" style="left:125.99px;top:554px;transform:scaleX(1.023);">700</div>
<div class="t" style="left:125.99px;top:545px;transform:scaleX(1.023);">800</div>
<div class="t" style="left:125.99px;top:535px;transform:scaleX(1.023);">900</div>
<div class="t" style="left:0;top:0;transform:translate(19.00px,198.59px) rotate(-90deg) scaleX(0.993);-webkit-text-stroke:0;">Data Library</div>
<div class="t" style="left:0;top:0;transform:translate(19.00px,349.39px) rotate(-90deg) scaleX(0.994);-webkit-text-stroke:0;">Device Controls</div>
<div class="t" style="left:0;top:0;transform:translate(18.50px,471.94px) rotate(-90deg) scaleX(0.945);-webkit-text-stroke:0;">Results</div>
<div class="t" style="left:0;top:0;transform:translate(18.50px,615.33px) rotate(-90deg) scaleX(1.031);-webkit-text-stroke:0;">Export</div>
<div class="t" style="left:0;top:0;transform:translate(69.00px,330.39px) rotate(-90deg) scaleX(0.976);-webkit-text-stroke:0;">Counts</div>
<div class="t" style="left:0;top:0;transform:translate(69.00px,597.29px) rotate(-90deg) scaleX(0.979);-webkit-text-stroke:0;">Counts</div>
</body></html>
